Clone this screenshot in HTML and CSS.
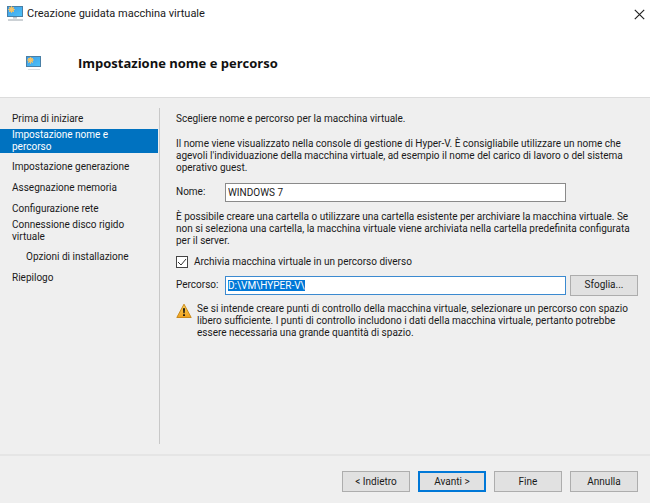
FILE: index.html
```html
<!DOCTYPE html>
<html lang="it">
<head>
  <meta charset="UTF-8">
  <meta name="viewport" content="width=device-width, initial-scale=1.0">
  <title>Creazione guidata macchina virtuale</title>
  <link rel="stylesheet" href="styles.css">
</head>
<body>
  <svg width="0" height="0" class="defs" aria-hidden="true">
    <defs>
      <linearGradient id="screen" x1="0" y1="0" x2="1" y2="1">
        <stop offset="0" stop-color="#3f9be8"/>
        <stop offset="1" stop-color="#4cc3f7"/>
      </linearGradient>
      <linearGradient id="amber" x1="0" y1="0" x2="0" y2="1">
        <stop offset="0" stop-color="#fbd25a"/>
        <stop offset="1" stop-color="#f0a01c"/>
      </linearGradient>
    </defs>
  </svg>

  <header class="titlebar">
    <svg class="app-icon" width="16" height="16" viewBox="0 0 16 16" aria-hidden="true">
      <rect x="0.5" y="0.5" width="15" height="10" fill="url(#screen)" stroke="#4a7fa5"/>
      <circle cx="4.5" cy="3.5" r="2.5" fill="#f6bb4a"/>
      <path d="M4.5 0v7M1 3.5h7M2 1l5 5M7 1L2 6" stroke="#f3c774" stroke-width="0.8"/>
      <path d="M6 11h4v1.5H6z" fill="#b9c4cc"/>
      <path d="M1 14h15" stroke="#9aa4ab"/>
    </svg>
    <span class="titlebar-text">Creazione guidata macchina virtuale</span>
    <button class="close" type="button" aria-label="Chiudi">
      <svg width="11" height="11" viewBox="0 0 11 11"><path d="M0.8 0.8l9.4 9.4M10.2 0.8L0.8 10.2" stroke="#222" stroke-width="1.2"/></svg>
    </button>
  </header>

  <div class="banner">
    <svg width="16" height="14" viewBox="0 0 16 14" aria-hidden="true">
      <rect x="0.5" y="0.5" width="14" height="10" fill="url(#screen)" stroke="#4a7fa5"/>
      <circle cx="4.5" cy="4" r="2.5" fill="#f6bb4a"/>
      <path d="M4.5 1v7M1 4h7M2 2l5 5M7 2L2 7" stroke="#f3c774" stroke-width="0.8"/>
      <path d="M2 13.5h12" stroke="#d9dee2"/>
    </svg>
    <h1>Impostazione nome e percorso</h1>
  </div>

  <main class="wizard">
    <nav class="steps">
      <a href="#">Prima di iniziare</a>
      <a href="#" class="tall active" aria-current="step">Impostazione nome e<br>percorso</a>
      <a href="#">Impostazione generazione</a>
      <a href="#">Assegnazione memoria</a>
      <a href="#">Configurazione rete</a>
      <a href="#" class="tall">Connessione disco rigido<br>virtuale</a>
      <a href="#" class="sub">Opzioni di installazione</a>
      <a href="#">Riepilogo</a>
    </nav>

    <form class="page" id="wizard-form">
      <p>Scegliere nome e percorso per la macchina virtuale.</p>
      <p class="intro">Il nome viene visualizzato nella console di gestione di Hyper-V. È consigliabile utilizzare un nome che<br>
        agevoli l'individuazione della macchina virtuale, ad esempio il nome del carico di lavoro o del sistema<br>
        operativo guest.</p>
      <div class="field">
        <label for="name">Nome:</label>
        <input type="text" id="name" value="WINDOWS 7">
      </div>
      <p class="location">È possibile creare una cartella o utilizzare una cartella esistente per archiviare la macchina virtuale. Se<br>
        non si seleziona una cartella, la macchina virtuale viene archiviata nella cartella predefinita configurata<br>
        per il server.</p>
      <div class="check">
        <input type="checkbox" id="store" checked>
        <label for="store">Archivia macchina virtuale in un percorso diverso</label>
      </div>
      <div class="field">
        <label for="path">Percorso:</label>
        <input type="text" id="path" class="current" value="D:\VM\HYPER-V\">
        <button type="button" class="btn">Sfoglia...</button>
      </div>
      <div class="warning">
        <svg width="16" height="16" viewBox="0 0 16 16" aria-hidden="true">
          <path d="M8 1.2L15.2 14.5H0.8z" fill="url(#amber)" stroke="#c98a1d" stroke-linejoin="round"/>
          <path d="M7 5.2h2l-.4 5H7.4zM7.1 11.2h1.8v1.8H7.1z" fill="#111"/>
        </svg>
        <p>Se si intende creare punti di controllo della macchina virtuale, selezionare un percorso con spazio<br>
          libero sufficiente. I punti di controllo includono i dati della macchina virtuale, pertanto potrebbe<br>
          essere necessaria una grande quantità di spazio.</p>
      </div>
    </form>
  </main>

  <footer class="actions">
    <button type="button" class="btn">&lt; Indietro</button>
    <button type="submit" form="wizard-form" class="btn primary">Avanti &gt;</button>
    <button type="button" class="btn">Fine</button>
    <button type="button" class="btn">Annulla</button>
  </footer>

  <script>
    const path = document.getElementById('path');
    path.focus();
    path.select();
  </script>
</body>
</html>
```
FILE: styles.css
```css
* { box-sizing: border-box; }
body { margin: 0; min-height: 100vh; display: flex; flex-direction: column; background: #efefef; color: #1a1a1a; font: 10px/12px Roboto, "DejaVu Sans Condensed", sans-serif; white-space: nowrap; }
p, h1 { margin: 0; }
button, input { font: inherit; color: inherit; }
svg { flex: none; display: block; }
.defs { position: absolute; }

.titlebar { display: flex; align-items: center; gap: 4px; height: 28px; padding: 0 4px 0 7px; background: #fff; }
.titlebar-text { flex: 1; font-size: 11px; line-height: 16px; }
.close { border: 0; background: none; padding: 0; width: 12px; height: 16px; display: flex; align-items: center; }

.banner { display: flex; align-items: center; gap: 36px; height: 70px; padding: 0 26px; background: #fff; border-bottom: 1px solid #dcdcdc; }
.banner h1 { font: bold 13px/16px "Open Sans", sans-serif; color: #111; }

.wizard { flex: 1; display: flex; padding: 10px 12px 10px 0; }
.steps { width: 160px; padding-right: 1px; border-right: 1px solid #c8c8c8; flex: none; }
.steps a { display: block; padding-left: 12px; line-height: 21px; color: inherit; text-decoration: none; }
.steps .tall { line-height: 12px; margin-bottom: 3px; }
.steps .sub { padding-left: 26px; }
.steps .active { background: #0072c0; color: #fff; }

.page { flex: 1; min-width: 0; padding: 5px 0 0 16px; }
.intro { margin-top: 13px; }
.field { display: flex; align-items: center; height: 20px; margin-top: 8px; }
.field label { width: 49px; }
.field input { flex: 1; min-width: 0; height: 19px; margin-right: 72px; padding: 0 2px; border: 1px solid #8a8a8a; background: #fff; outline: none; }
.field .current { margin-right: 4px; border-color: #3b8ad0; }
.field input::selection { background: #0078d7; color: #fff; }
.location { margin-top: 9px; }
.check { display: flex; align-items: center; gap: 6px; height: 13px; margin-top: 8px; }
.check input { appearance: none; margin: 0; width: 12px; height: 12px; border: 1px solid #444; background: #fff url("data:image/svg+xml,%3Csvg xmlns='http://www.w3.org/2000/svg' viewBox='0 0 10 10'%3E%3Cpath d='M1 5l3 3 5-6' fill='none' stroke='%23333'/%3E%3C/svg%3E") center / 10px no-repeat; }
.check + .field { margin-top: 7px; }
.warning { display: flex; gap: 5px; margin-top: 8px; }

.btn { width: 68px; height: 21px; padding: 0; border: 1px solid #adadad; background: #e1e1e1; text-align: center; }
.btn.primary { border: 2px solid #0078d7; }

.actions { display: flex; justify-content: flex-end; gap: 8px; height: 49px; padding: 15px 12px 0 0; border-top: 2px solid #e5e5e5; }
```
